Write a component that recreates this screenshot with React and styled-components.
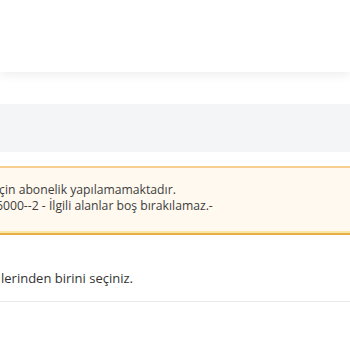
import React from 'react'
import styled, { createGlobalStyle } from 'styled-components'

const GlobalStyle = createGlobalStyle`
  html, body {
    margin: 0;
    padding: 0;
    background: #ffffff;
    overflow: hidden;
  }
  body {
    font-family: 'Open Sans', 'Noto Sans', sans-serif;
    color: #444;
  }
`

const Page = styled.div`
  width: 350px;
  height: 350px;
  overflow: hidden;
  display: flex;
  flex-direction: column;
`

const Header = styled.header`
  height: 72px;
  flex-shrink: 0;
  background: #fff;
  box-shadow: 0 3px 10px rgba(0, 0, 0, 0.07);
  position: relative;
  z-index: 1;
`

const Band = styled.div`
  margin-top: 32px;
  height: 48px;
  flex-shrink: 0;
  background: #f4f5f7;
`

const Alert = styled.div`
  margin-top: 14px;
  flex-shrink: 0;
  background: #fff9ef;
  border-top: 2px solid #f7cd90;
  border-bottom: 2px solid #e6ae47;
  box-shadow: inset 0 -2px 0 #fbe7a6;
  padding: 14px 0 19px;
  overflow: hidden;
`

const Line = styled.p`
  margin: 0 0 0 ${({ $shift }) => $shift || 0}px;
  font-size: ${({ $size }) => $size || 12.2}px;
  line-height: 16px;
  white-space: nowrap;
  color: #3d3d3d;
`

const Section = styled.div`
  margin-top: 35px;
  padding-bottom: 15px;
  border-bottom: 1px solid #e9e9e9;
`

const Hint = styled(Line)`
  color: #333;
`

export default function App() {
  return (
    <Page>
      <GlobalStyle />
      <Header />
      <Band />
      <Alert>
        <Line $shift={-4}>için abonelik yapılamamaktadır.</Line>
        <Line $shift={-4}>6000--2 - İlgili alanlar boş bırakılamaz.-</Line>
      </Alert>
      <Section>
        <Hint $size={13} $shift={1}>lerinden birini seçiniz.</Hint>
      </Section>
    </Page>
  )
}
